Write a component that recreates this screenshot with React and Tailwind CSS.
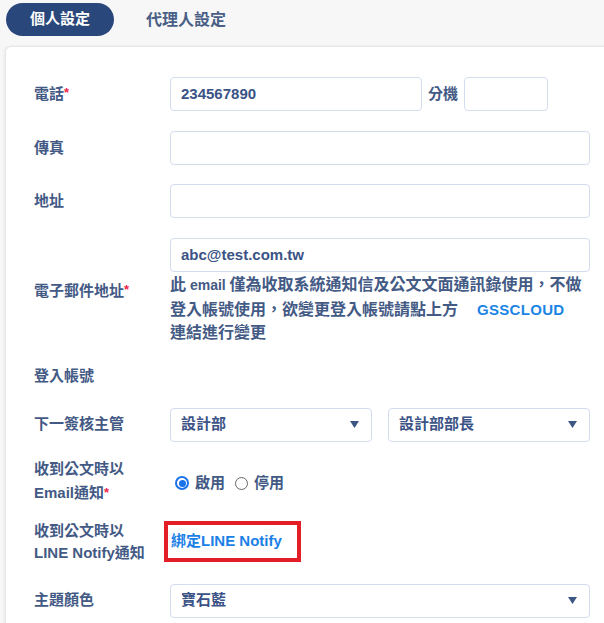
import { useState } from 'react';

const font = { fontFamily: '"Liberation Sans", "Noto Sans CJK TC", sans-serif' };

function Label({ children, required }) {
  return (
    <div className="w-[136px] shrink-0 pr-2 font-semibold text-[15px] text-[#435a85]">
      {children}
      {required && <span className="text-[#f0264a] align-top text-[13px]">*</span>}
    </div>
  );
}

function TextInput({ value = '', className = 'w-[420px]' }) {
  return (
    <div className={`h-[34px] rounded-[4px] border border-[#d3ddee] bg-white px-[10px] flex items-center font-bold text-[15px] text-[#3b5386] ${className}`}>
      {value}
    </div>
  );
}

function Select({ value, className = 'w-[420px]' }) {
  return (
    <div className={`h-[34px] rounded-[4px] border border-[#d3ddee] bg-white pl-[10px] pr-[12px] flex items-center justify-between font-semibold text-[15px] text-[#3b5386] ${className}`}>
      <span>{value}</span>
      <svg width="9" height="7" viewBox="0 0 9 7">
        <polygon points="0,0 9,0 4.5,7" fill="#3e5684" />
      </svg>
    </div>
  );
}

function Radio({ checked, label, onClick }) {
  return (
    <button onClick={onClick} className="flex items-center gap-[6px] font-semibold text-[15px] text-[#435a85]">
      {checked ? (
        <span className="w-[14px] h-[14px] rounded-full border-[2px] border-[#1a73e8] flex items-center justify-center">
          <span className="w-[7px] h-[7px] rounded-full bg-[#1a73e8]" />
        </span>
      ) : (
        <span className="w-[13px] h-[13px] rounded-full border border-[#666]" />
      )}
      <span>{label}</span>
    </button>
  );
}

export default function App() {
  const [tab, setTab] = useState('personal');
  const [emailNotify, setEmailNotify] = useState(true);

  return (
    <div className="min-h-[623px] bg-[#f7f7f7] overflow-hidden" style={font}>
      {/* 分頁 */}
      <div className="flex items-center pt-[3px] pl-[6px] gap-[8px]">
        <button
          onClick={() => setTab('personal')}
          className={`h-[33px] px-[24px] rounded-full text-[15px] font-bold ${tab === 'personal' ? 'bg-[#2a477c] text-white' : 'text-[#4a5f86]'}`}
        >
          個人設定
        </button>
        <button
          onClick={() => setTab('agent')}
          className={`h-[33px] px-[24px] rounded-full text-[16px] font-semibold ${tab === 'agent' ? 'bg-[#2a477c] text-white' : 'text-[#4a5f86]'}`}
        >
          代理人設定
        </button>
      </div>

      {/* 表單卡片 */}
      <div className="mt-[10px] ml-[5px] w-[640px] rounded-tl-[6px] bg-white border-l border-t border-[#e6e6e6] shadow-[-1px_0_3px_rgba(0,0,0,0.06)] pl-[28px] pt-[30px] pb-[10px]">
        <div className="flex items-center mb-[20px]">
          <Label required>電話</Label>
          <TextInput value="234567890" className="w-[252px]" />
          <span className="mx-[6px] font-semibold text-[15px] text-[#435a85]">分機</span>
          <TextInput className="w-[84px]" />
        </div>

        <div className="flex items-center mb-[19px]">
          <Label>傳真</Label>
          <TextInput />
        </div>

        <div className="flex items-center mb-[20px]">
          <Label>地址</Label>
          <TextInput />
        </div>

        <div className="flex items-center mb-[15px]">
          <Label required>電子郵件地址</Label>
          <div className="w-[420px]">
            <TextInput value="abc@test.com.tw" />
            <p className="mt-[1px] font-semibold text-[16px] leading-[23.5px] text-[#435a85] whitespace-nowrap">
              <span className="block">此<span className="text-[14px] font-bold"> email </span>僅為收取系統通知信及公文文面通訊錄使用，不做</span>
              <span className="block">
                登入帳號使用，欲變更登入帳號請點上方
                <a href="#" className="ml-[19px] font-bold text-[15px] text-[#1b85e6] tracking-[0.3px]">GSSCLOUD</a>
              </span>
              <span className="block">連結進行變更</span>
            </p>
          </div>
        </div>

        <div className="flex items-center h-[34px] mb-[14px]">
          <Label>登入帳號</Label>
        </div>

        <div className="flex items-center mb-[15px]">
          <Label>下一簽核主管</Label>
          <div className="flex gap-[16px]">
            <Select value="設計部" className="w-[202px]" />
            <Select value="設計部部長" className="w-[202px]" />
          </div>
        </div>

        <div className="flex items-center mb-[15px]">
          <div className="w-[136px] shrink-0 font-semibold text-[15px] leading-[24px] text-[#435a85]">
            收到公文時以<br /><span className="font-bold">Email</span>通知<span className="text-[#f0264a] align-top text-[13px]">*</span>
          </div>
          <div className="flex items-center gap-[10px] ml-[5px] mt-[5px]">
            <Radio checked={emailNotify} label="啟用" onClick={() => setEmailNotify(true)} />
            <Radio checked={!emailNotify} label="停用" onClick={() => setEmailNotify(false)} />
          </div>
        </div>

        <div className="flex items-center mb-[20px]">
          <div className="w-[130px] shrink-0 font-semibold text-[15px] leading-[22px] text-[#435a85]">
            收到公文時以<br /><span className="font-bold">LINE Notify</span>通知
          </div>
          <div className="border-[4px] border-[#e41e26] h-[41px] w-[137px] pl-[3px] flex items-center">
            <a href="#" className="font-semibold text-[15px] text-[#1b7fe6]">綁定<span className="font-bold">LINE Notify</span></a>
          </div>
        </div>

        <div className="flex items-center">
          <Label>主題顏色</Label>
          <Select value="寶石藍" />
        </div>
      </div>
    </div>
  );
}
